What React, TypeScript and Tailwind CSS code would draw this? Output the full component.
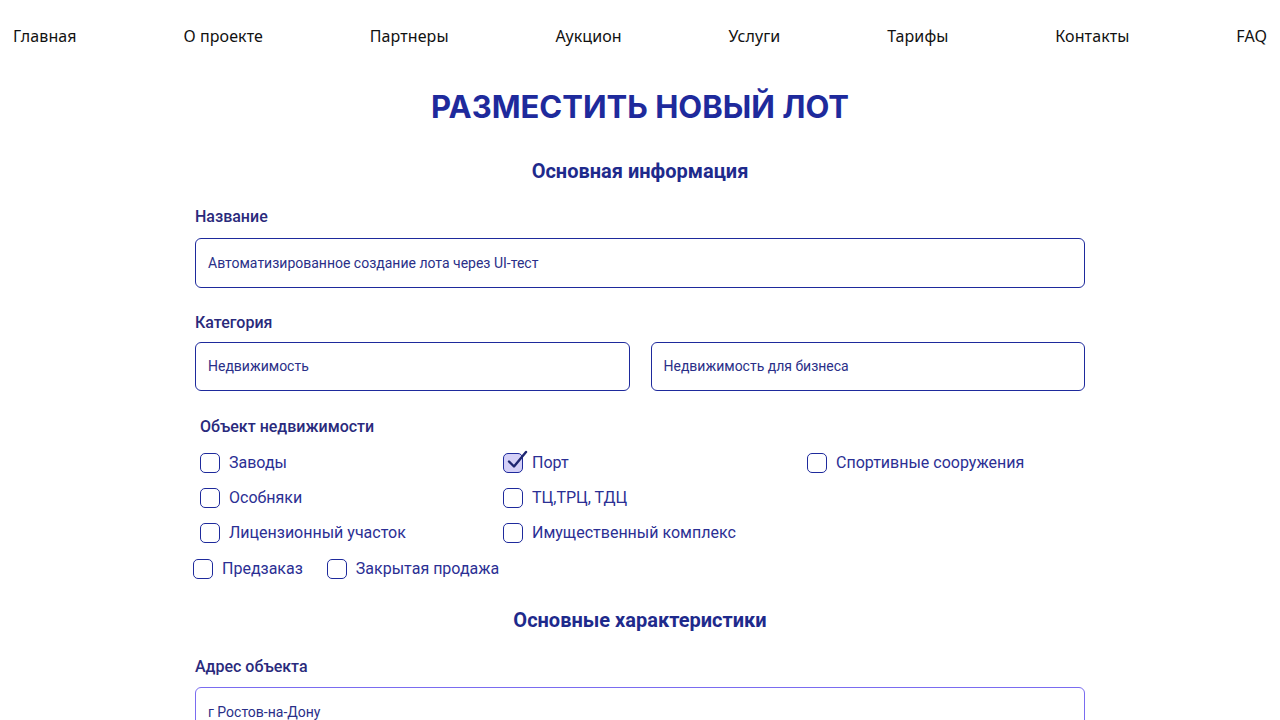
import React from "react";

const navItems = ["Главная", "О проекте", "Партнеры", "Аукцион", "Услуги", "Тарифы", "Контакты", "FAQ"];

function Box({ checked }: { checked?: boolean }) {
  return (
    <span
      className={`relative inline-block w-[20px] h-[20px] shrink-0 rounded-[5px] border border-[#1e2a9c] ${
        checked ? "bg-[#d4d0f7]" : "bg-white"
      }`}
    >
      {checked && (
        <svg className="absolute left-[1px] top-[-5px]" width="24" height="22" viewBox="0 0 24 22" fill="none">
          <path d="M4 12.5 L9 17.5 L21 3" stroke="#1e2670" strokeWidth="2.4" strokeLinecap="round" strokeLinejoin="round" />
        </svg>
      )}
    </span>
  );
}

function Check({ label, checked }: { label: string; checked?: boolean }) {
  return (
    <label className="flex items-center gap-[9px] text-[16px] text-[#2b2f94] leading-[20px]">
      <Box checked={checked} />
      <span>{label}</span>
    </label>
  );
}

export default function App() {
  return (
    <div className="bg-white min-h-[720px] font-['Roboto',sans-serif]">
      <nav className="flex justify-between items-center px-[13px] h-[71px] font-['Noto_Sans',sans-serif] text-[16px] tracking-[0.1px] text-[#111]">
        {navItems.map((n) => (
          <span key={n}>{n}</span>
        ))}
      </nav>
      <h1 className="text-center font-['Inter',sans-serif] font-bold text-[31px] leading-[72px] text-[#1e2a9c]">
        РАЗМЕСТИТЬ НОВЫЙ ЛОТ
      </h1>
      <div className="w-[890px] mx-auto">
        <h2 className="text-center font-bold text-[20px] leading-[28px] text-[#1e2a8c] mt-[14px]">Основная информация</h2>
        <div className="mt-[22px] text-[16px] font-medium text-[#2a2a7c] leading-[20px]">Название</div>
        <div className="mt-[11px] h-[50px] rounded-[6px] border border-[#1e2a9c] flex items-center px-[12px] text-[14px] text-[#2a2f88]">
          Автоматизированное создание лота через UI-тест
        </div>
        <div className="mt-[25px] text-[16px] font-medium text-[#2a2a7c] leading-[20px]">Категория</div>
        <div className="mt-[9px] grid grid-cols-2 gap-[21px]">
          <div className="h-[49px] rounded-[6px] border border-[#1e2a9c] flex items-center px-[12px] text-[14px] text-[#2a2f88]">
            Недвижимость
          </div>
          <div className="h-[49px] rounded-[6px] border border-[#1e2a9c] flex items-center px-[12px] text-[14px] text-[#2a2f88]">
            Недвижимость для бизнеса
          </div>
        </div>
        <div className="mt-[26px] ml-[5px] text-[16px] font-medium text-[#2a2a7c] leading-[20px]">Объект недвижимости</div>
        <div className="mt-[16px] ml-[5px] grid grid-cols-[303px_304px_1fr] gap-y-[15px]">
          <Check label="Заводы" />
          <Check label="Порт" checked />
          <Check label="Спортивные сооружения" />
          <Check label="Особняки" />
          <Check label="ТЦ,ТРЦ, ТДЦ" />
          <span />
          <Check label="Лицензионный участок" />
          <Check label="Имущественный комплекс" />
          <span />
        </div>
        <div className="mt-[16px] ml-[-2px] flex gap-[24px]">
          <Check label="Предзаказ" />
          <Check label="Закрытая продажа" />
        </div>
        <h2 className="text-center font-bold text-[20px] leading-[28px] text-[#1e2a8c] mt-[27px]">Основные характеристики</h2>
        <div className="mt-[23px] text-[16px] font-medium text-[#2a2a7c] leading-[20px]">Адрес объекта</div>
        <div className="mt-[10px] h-[50px] rounded-[6px] border border-[#7a6cf0] flex items-center px-[12px] text-[14px] text-[#2a2f88]">
          г Ростов-на-Дону
        </div>
      </div>
    </div>
  );
}
